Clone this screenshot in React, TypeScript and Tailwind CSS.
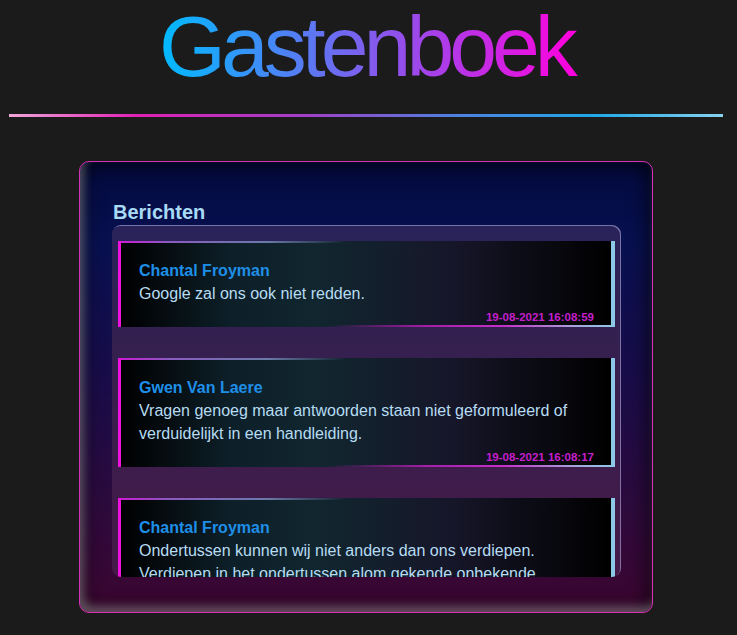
import React from "react";

const messages = [
  { name: "Chantal Froyman", text: "Google zal ons ook niet redden.", date: "19-08-2021 16:08:59" },
  {
    name: "Gwen Van Laere",
    text: "Vragen genoeg maar antwoorden staan niet geformuleerd of verduidelijkt in een handleiding.",
    date: "19-08-2021 16:08:17",
  },
  {
    name: "Chantal Froyman",
    text: "Ondertussen kunnen wij niet anders dan ons verdiepen. Verdiepen in het ondertussen alom gekende onbekende.",
    date: "19-08-2021 16:07:42",
  },
];

function Message({ name, text, date }: { name: string; text: string; date: string }) {
  return (
    <div className="mx-[6px] mb-[31px] flex shrink-0 flex-col border-l-[3px] border-r-[4px] border-l-[#f010e0] border-r-[#8ec8e8] bg-[linear-gradient(to_right,#000000_0%,#0d1f28_22%,#11262f_40%,#161629_68%,#000000_100%)]">
      <div className="h-[2px] bg-[linear-gradient(to_right,#c81ed2_0%,#8a5cc0_10%,#6a7aa8_30%,rgba(100,120,170,0)_46%)]" />
      <div className="pl-[18px] pr-[17px] pt-[16px] pb-[1px]">
        <div className="text-[16px] font-bold leading-[23px] text-[#1e8fe8]">{name}</div>
        <div className="text-[16px] leading-[23px] text-[#b6dcf3]">{text}</div>
        <div className="mt-[6px] text-right text-[11.5px] font-bold leading-[13px] text-[#c41fca]">{date}</div>
      </div>
      <div className="h-[2px] bg-[linear-gradient(to_right,rgba(160,30,160,0)_42%,#a41ea8_62%,#c530c8_78%,#a8a0d8_92%,#90c8e8_100%)]" />
    </div>
  );
}

export default function App() {
  return (
    <div className="min-h-screen w-full bg-[#1b1b1b] font-['Liberation_Sans',Arial,sans-serif]">
      <div className="flex w-[732px] flex-col items-stretch">
        <div className="flex justify-center pl-[5px]">
          <h1 className="inline-block bg-[linear-gradient(to_right,#00bbff,#ff00dd)] bg-clip-text pr-[5px] text-[86px] leading-[92px] tracking-[-5px] text-transparent">
            Gastenboek
          </h1>
        </div>
        <div className="mx-[9px] mt-[22px] h-[3px] bg-[linear-gradient(to_right,#f0a6d8_0%,#e020b4_18%,#a040c8_42%,#5080e0_62%,#20a8e8_82%,#86d2ee_100%)]" />
        <div className="mx-[79px] mt-[44px] flex h-[452px] flex-col rounded-[10px] border border-[#d630b4] bg-[linear-gradient(to_bottom,#030a3e_0%,#081050_18%,#1a0c48_50%,#2e0a3c_78%,#3c0530_100%)] pl-[32px] pr-[31px] pt-[38px] pb-[34px] shadow-[inset_4px_-6px_10px_rgba(255,255,255,0.3),inset_0_0_22px_rgba(0,0,0,0.95)]">
          <h2 className="pl-[1px] text-[20px] font-bold leading-[24px] text-[#a8daf5]">Berichten</h2>
          <div className="mt-[1px] flex h-[352px] flex-col overflow-hidden rounded-[9px] bg-[linear-gradient(to_bottom,#29235a_0%,#35204f_35%,#3e1c4b_70%,#461a48_100%)] pt-[16px] shadow-[inset_-1px_1px_0_rgba(170,170,225,0.6)]">
            {messages.map((m, i) => (
              <Message key={i} {...m} />
            ))}
          </div>
        </div>
      </div>
    </div>
  );
}
